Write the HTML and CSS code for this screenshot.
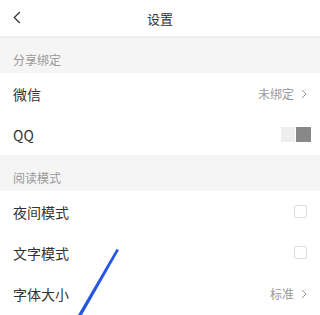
FILE: index.html
```html
<!DOCTYPE html>
<html lang="zh-CN">
<head>
    <meta charset="UTF-8">
    <meta name="viewport" content="width=device-width, initial-scale=1.0">
    <title>设置</title>
    <link rel="stylesheet" href="styles.css">
</head>
<body>
    <header class="topbar">
        <svg class="back" width="8" height="13" viewBox="0 0 8 13"><path d="M6.8 1 L1.3 6.5 L6.8 12" fill="none" stroke="#333" stroke-width="1.2"/></svg>
        <div class="title">设置</div>
    </header>

    <div class="section">分享绑定</div>
    <div class="row">
        <span class="label">微信</span>
        <span class="value">未绑定
            <svg class="chev" width="6" height="10" viewBox="0 0 6 10"><path d="M1 1 L5 5 L1 9" fill="none" stroke="#999" stroke-width="1"/></svg>
        </span>
    </div>
    <div class="row">
        <span class="label">QQ</span>
        <span class="switch"><span class="switch-off"></span><span class="switch-on"></span></span>
    </div>

    <div class="section">阅读模式</div>
    <div class="row">
        <span class="label">夜间模式</span>
        <span class="check"></span>
    </div>
    <div class="row">
        <span class="label">文字模式</span>
        <span class="check"></span>
    </div>
    <div class="row">
        <span class="label">字体大小</span>
        <span class="value">标准
            <svg class="chev" width="6" height="10" viewBox="0 0 6 10"><path d="M1 1 L5 5 L1 9" fill="none" stroke="#999" stroke-width="1"/></svg>
        </span>
    </div>

    <!-- pen stroke drawn over the screen -->
    <svg class="stroke" width="320" height="315" viewBox="0 0 320 315">
        <polygon points="116.5,249 119,250 82,315 78,315" fill="#2657e3"/>
    </svg>
</body>
</html>
```

FILE: styles.css
```css
body, html {
    margin: 0;
    padding: 0;
    font-family: "Noto Sans CJK SC", "Noto Sans", sans-serif;
    background-color: #fff;
    color: #333;
}
body {
    position: relative;
    height: 315px;
    overflow: hidden;
}
.topbar {
    height: 36px;
    display: flex;
    align-items: center;
    justify-content: center;
    position: relative;
    border-bottom: 1px solid #ececec;
    box-shadow: 0 1px 2px rgba(0, 0, 0, 0.04);
}
.back {
    position: absolute;
    left: 13px;
    top: 11px;
}
.title {
    font-size: 13px;
    color: #333;
}
.section {
    height: 36px;
    box-sizing: border-box;
    background-color: #f5f5f5;
    color: #999;
    font-size: 12px;
    padding: 0 13px 5px;
    display: flex;
    align-items: flex-end;
}
.row {
    height: 41px;
    box-sizing: border-box;
    padding: 0 13px;
    display: flex;
    align-items: center;
    justify-content: space-between;
}
.label {
    font-size: 14px;
    color: #333;
}
.value {
    font-size: 12px;
    color: #999;
    display: flex;
    align-items: center;
    gap: 7px;
}
.switch {
    display: flex;
    margin-right: -4px;
}
.switch-off {
    width: 14px;
    height: 15px;
    background-color: #eee;
    margin-right: 1px;
}
.switch-on {
    width: 15px;
    height: 15px;
    background-color: #888;
}
.check {
    width: 11px;
    height: 11px;
    border: 1px solid #ddd;
    border-radius: 2px;
}
.stroke {
    position: absolute;
    left: 0;
    top: 0;
    pointer-events: none;
}
```
